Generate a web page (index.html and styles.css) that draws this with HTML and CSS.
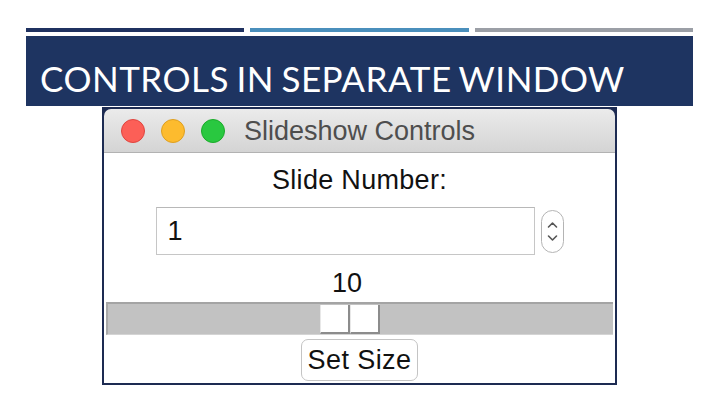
FILE: index.html
```html
<!DOCTYPE html>
<html>
<head>
<meta charset="utf-8">
<link rel="stylesheet" href="styles.css">
</head>
<body>
<div class="slide">
  <div class="bars">
    <span class="bar bar-navy"></span>
    <span class="bar bar-blue"></span>
    <span class="bar bar-grey"></span>
  </div>
  <div class="title-box">
    <h1 class="title">CONTROLS IN SEPARATE WINDOW</h1>
  </div>
  <div class="window">
    <div class="titlebar">
      <span class="light light-red"></span>
      <span class="light light-yellow"></span>
      <span class="light light-green"></span>
      <span class="wtitle">Slideshow Controls</span>
    </div>
    <div class="content">
      <div class="label">Slide Number:</div>
      <div class="spinrow">
        <div class="entry">1</div>
        <div class="spinner">
          <svg width="23" height="43" viewBox="0 0 23 43">
            <rect x="0.5" y="0.5" width="22" height="42" rx="11" ry="11" fill="#fff" stroke="#b4b4b4"/>
            <path d="M7.5 17 L11.5 13 L15.5 17" fill="none" stroke="#555" stroke-width="1.6" stroke-linecap="round" stroke-linejoin="round"/>
            <path d="M7.5 26 L11.5 30 L15.5 26" fill="none" stroke="#555" stroke-width="1.6" stroke-linecap="round" stroke-linejoin="round"/>
          </svg>
        </div>
      </div>
      <div class="scale">
        <div class="scale-pos" style="margin-left: 212px">
          <div class="value">10</div>
        </div>
        <div class="track">
          <div class="thumb" style="margin-left: 212px">
            <span class="thumb-half"></span>
            <span class="thumb-half"></span>
          </div>
        </div>
      </div>
      <button class="btn">Set Size</button>
    </div>
  </div>
</div>
</body>
</html>
```

FILE: styles.css
```css
html, body {
  margin: 0;
  padding: 0;
  background: #ffffff;
}

.slide {
  width: 720px;
  height: 405px;
  overflow: hidden;
  padding-top: 28px;
  box-sizing: border-box;
}

.bars {
  display: flex;
  gap: 6px;
  margin-left: 26px;
  width: 667px;
}

.bar {
  flex: 1;
  height: 4px;
}
.bar-navy { background: #1f3160; }
.bar-blue { background: #4a8fbc; }
.bar-grey { background: #9b9fa6; }

.title-box {
  margin-top: 4px;
  margin-left: 26px;
  width: 667px;
  height: 70px;
  background: #1e3461;
  box-sizing: border-box;
  padding-left: 14px;
  padding-top: 22px;
}

.title {
  margin: 0;
  font-family: "Lato", "Open Sans", sans-serif;
  font-weight: 400;
  font-size: 35px;
  line-height: 40px;
  color: #ffffff;
  letter-spacing: 0.5px;
  word-spacing: -2px;
  white-space: nowrap;
}

.window {
  margin-top: 1px;
  margin-left: 102px;
  width: 515px;
  height: 278px;
  box-sizing: border-box;
  border: 2px solid #1d2b52;
  background: #1d2b52;
  display: flex;
  flex-direction: column;
}

.titlebar {
  height: 44px;
  box-sizing: border-box;
  border-bottom: 1px solid #b2b2b2;
  border-radius: 7px 7px 0 0;
  background: linear-gradient(#ebebeb, #d4d4d4);
  display: flex;
  align-items: center;
  padding-left: 17px;
  font-family: "Liberation Sans", Arial, sans-serif;
}

.light {
  width: 22px;
  height: 22px;
  border-radius: 50%;
  margin-right: 16px;
  flex: none;
}
.light-red { background: #fc5f57; border: 1px solid #e0443e; }
.light-yellow { background: #fdbb2e; border: 1px solid #de9f1f; }
.light-green { background: #29c840; border: 1px solid #1aab29; }

.wtitle {
  margin-left: 3px;
  font-size: 27px;
  color: #4e4e4e;
  padding-top: 1px;
}

.content {
  flex: 1;
  background: #ffffff;
  display: flex;
  flex-direction: column;
  align-items: center;
  font-family: "Liberation Sans", Arial, sans-serif;
  font-size: 27px;
  color: #111111;
}

.label {
  line-height: 32px;
  margin-top: 11px;
  letter-spacing: 0.3px;
}

.spinrow {
  margin-top: 11px;
  display: flex;
  align-items: center;
  gap: 6px;
}

.entry {
  width: 379px;
  height: 48px;
  box-sizing: border-box;
  border: 1px solid #c6c6c6;
  border-top-color: #b8b8b8;
  padding-left: 11px;
  line-height: 46px;
  color: #111111;
}

.spinner {
  display: flex;
}

.scale {
  align-self: stretch;
  margin-top: 12px;
  padding: 0 2px;
  display: flex;
  flex-direction: column;
}

.scale-pos {
  width: 60px;
  display: flex;
  justify-content: center;
}

.value {
  line-height: 32px;
  margin-left: -2px;
}

.track {
  margin-top: 3px;
  height: 33px;
  box-sizing: border-box;
  background: #c2c2c2;
  border-top: 2px solid #a4a4a4;
  border-left: 2px solid #a8a8a8;
  border-bottom: 1px solid #d4d4d4;
  display: flex;
  align-items: flex-start;
}

.thumb {
  margin-top: 1px;
  width: 60px;
  height: 29px;
  display: flex;
}

.thumb-half {
  flex: 1;
  background: #ffffff;
  border-right: 2px solid #8c8c8c;
  border-bottom: 2px solid #8c8c8c;
  border-left: 1px solid #e8e8e8;
}

.btn {
  margin-top: 4px;
  width: 117px;
  height: 42px;
  box-sizing: border-box;
  background: #ffffff;
  border: 1px solid #c4c4c4;
  border-radius: 7px;
  font-family: "Liberation Sans", Arial, sans-serif;
  font-size: 27px;
  color: #111111;
  padding: 0;
  line-height: 38px;
  letter-spacing: 0.4px;
}
```
